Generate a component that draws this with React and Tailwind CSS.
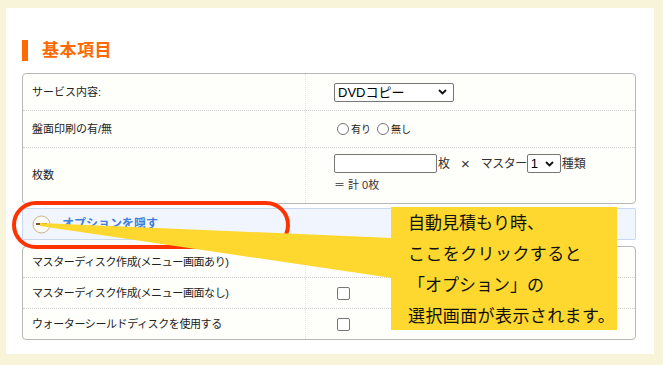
import React from "react";

const font = { fontFamily: '"Liberation Sans", "Noto Sans CJK JP", sans-serif' };

function FakeSelect({ label, width }) {
  return (
    <div
      className="flex items-center justify-between h-[19px] border border-[#767676] rounded-[2px] bg-white pl-[3px] pr-[6px] text-[13px] leading-none text-black"
      style={{ width }}
    >
      <span>{label}</span>
      <svg width="9" height="6" viewBox="0 0 9 6">
        <polyline points="1,1 4.5,4.5 8,1" fill="none" stroke="#111" strokeWidth="1.8" />
      </svg>
    </div>
  );
}

function Radio({ label }) {
  return (
    <div className="flex items-center mr-[6px]">
      <span className="w-[12px] h-[12px] rounded-full border border-[#767676] bg-white" />
      <span className="ml-[2px] text-[10px] text-[#222]">{label}</span>
    </div>
  );
}

function Checkbox() {
  return <span className="block w-[13px] h-[13px] rounded-[2px] border border-[#767676] bg-white" />;
}

function Row({ label, children, className = "h-[37px] border-b", tight }) {
  return (
    <div className={`flex border-dotted border-[#cfcfcf] ${className}`}>
      <div
        className={`w-[282px] flex items-center pl-[9px] text-[11px] text-[#222] ${tight ? "tracking-[-0.4px]" : ""}`}
      >
        {label}
      </div>
      <div className="flex-1 border-l border-dotted border-[#e2e2e2] flex items-center">{children}</div>
    </div>
  );
}

export default function App() {
  return (
    <div className="relative w-[663px] h-[365px] bg-[#f8f4d9] pt-[8px] pl-[6px]" style={font}>
      <div className="w-[648px] h-[346px] bg-white pl-[16px] pt-[32px]">
        <div className="flex items-center h-[21px]">
          <span className="block w-[6px] h-[21px] bg-[#ff6a00]" />
          <span className="ml-[14px] text-[17px] leading-none font-semibold tracking-[0.5px] text-[#ff6a00]">基本項目</span>
        </div>

        <div className="mt-[12px] w-[614px] border border-[#b8b8b8] rounded-[4px] bg-[#fefefb]">
          <Row label="サービス内容:">
            <div className="pl-[28px]">
              <FakeSelect label="DVDコピー" width={120} />
            </div>
          </Row>
          <Row label="盤面印刷の有/無">
            <div className="pl-[31px] flex items-center">
              <Radio label="有り" />
              <Radio label="無し" />
            </div>
          </Row>
          <Row label="枚数" className="h-[55px]">
            <div className="pl-[28px] self-stretch pt-[6px] flex flex-col text-[12px] text-[#333]">
              <div className="flex items-center h-[19px]">
                <span className="block w-[103px] h-[19px] border border-[#767676] rounded-[2px] bg-white" />
                <span className="ml-[1px]">枚</span>
                <span className="ml-[11px] text-[15px] leading-none">×</span>
                <span className="ml-[11px] tracking-[-0.5px]">マスター</span>
                <FakeSelect label="1" width={34} />
                <span className="ml-[1px]">種類</span>
              </div>
              <div className="mt-[5px] text-[11px] leading-[14px]">＝ 計 0枚</div>
            </div>
          </Row>
        </div>

        <div className="mt-[4px] w-[614px] h-[32px] border border-[#c9d8f1] bg-[#f1f5fd] rounded-[2px] flex items-center pl-[9px]">
          <svg width="19" height="19" viewBox="0 0 19 19">
            <circle cx="9.5" cy="9.5" r="8.5" fill="#fbfaf6" stroke="#c9b48a" strokeWidth="1" />
            <line x1="4" y1="9" x2="15" y2="9" stroke="#7a5a24" strokeWidth="2" />
          </svg>
          <span className="ml-[11px] text-[12px] font-bold text-[#3f7fdb]">オプションを隠す</span>
        </div>

        <div className="mt-[6px] w-[614px] border border-[#b8b8b8] rounded-[4px] bg-[#fefefb]">
          <Row label="マスターディスク作成(メニュー画面あり)" className="h-[31px] border-b" tight>
            <div className="pl-[31px]">
              <Checkbox />
            </div>
          </Row>
          <Row label="マスターディスク作成(メニュー画面なし)" className="h-[31px] border-b" tight>
            <div className="pl-[31px]">
              <Checkbox />
            </div>
          </Row>
          <Row label="ウォーターシールドディスクを使用する" className="h-[30px]" tight>
            <div className="pl-[31px]">
              <Checkbox />
            </div>
          </Row>
        </div>
      </div>

      <div className="absolute left-[12px] top-[201px] w-[278px] h-[48px] border-[4px] border-[#ff3300] rounded-full" />
      <svg className="absolute left-0 top-0 pointer-events-none" width="663" height="365">
        <polygon points="40,223 392,238 392,278 40,226" fill="#fed82f" />
      </svg>
      <div className="absolute left-[391px] top-[207px] w-[226px] h-[123px] bg-[#fed82f] pl-[17px] pt-[1px] text-[17px] leading-[31px] text-[#111]">
        <div>自動見積もり時、</div>
        <div className="tracking-[0.4px]">ここをクリックすると</div>
        <div>「オプション」の</div>
        <div className="tracking-[0.4px]">選択画面が表示されます。</div>
      </div>
    </div>
  );
}
